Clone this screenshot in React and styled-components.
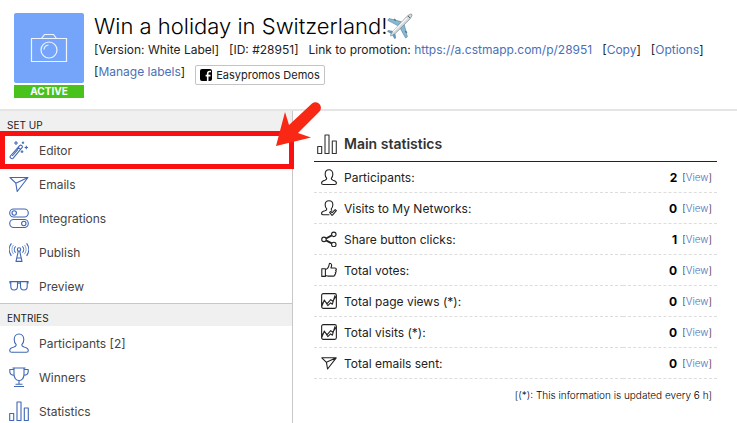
/**
 *
 * PromotionPage
 *
 */

import React from 'react'
import styled, { createGlobalStyle } from 'styled-components'

const GlobalStyle = createGlobalStyle`
  *, *::before, *::after {
    box-sizing: border-box;
  }

  body {
    margin: 0;
    background: #fff;
    color: #222;
    font-family: Inter, "Liberation Sans", sans-serif;
    font-size: 12px;
    font-weight: 400;
  }
`

const Page = styled.div`
  display: flex;
  flex-direction: column;
  height: 100vh;
  overflow: hidden;
`

const Link = styled.a`
  color: #4a6fb8;
  text-decoration: none;
`

const Header = styled.header`
  display: flex;
  gap: 10px;
  padding: 13px 14px 11px;
  border-bottom: 2px solid #e5e5e5;
`

const Cover = styled.div`
  display: flex;
  flex-direction: column;
  gap: 2px;
  flex: none;
  width: 70px;
`

const Thumb = styled.div`
  display: flex;
  align-items: center;
  justify-content: center;
  height: 70px;
  border-radius: 2px;
  background: #75a5fb;
`

const Status = styled.span`
  background: #49c31c;
  color: #fff;
  font-size: 10px;
  font-weight: 700;
  line-height: 13px;
  text-align: center;
`

const Details = styled.div`
  flex: 1;
  min-width: 0;
`

const Title = styled.h1`
  display: flex;
  align-items: center;
  margin: 0;
  color: #000;
  font-size: 22px;
  font-weight: 300;
  line-height: 26px;
`

const Meta = styled.div`
  display: flex;
  flex-wrap: wrap;
  align-items: flex-start;
  column-gap: 10px;
  line-height: 22px;
`

const Tag = styled.span`
  display: flex;
  align-items: center;
  gap: 4px;
  height: 20px;
  margin-top: 4px;
  padding: 0 4px;
  border: 1px solid #c4c4c4;
  border-radius: 2px;
  font-size: 11px;
`

const Body = styled.div`
  display: flex;
  flex: 1;
  min-height: 0;
`

const Sidebar = styled.nav`
  position: relative;
  flex: none;
  width: 293px;
  border-right: 1px solid #c8c8c8;
`

const SectionTitle = styled.h2`
  margin: 0;
  padding: 0 7px;
  height: ${props => (props.$divided ? '23px' : '22px')};
  border-top: ${props => (props.$divided ? '1px solid #c8c8c8' : '0')};
  background: #f0f0f0;
  color: #222;
  font-size: 10px;
  font-weight: 400;
  line-height: 28px;
`

const MenuList = styled.ul`
  margin: 0;
  padding: 0;
  list-style: none;
`

const MenuLink = styled.a`
  display: flex;
  align-items: center;
  gap: 10px;
  height: 34px;
  padding: 0 9px;
  color: #444;
  text-decoration: none;

  svg {
    color: #3f67b5;
  }
`

const Highlight = styled.div`
  position: absolute;
  z-index: 1;
  top: 20px;
  left: 0;
  right: -2px;
  height: 38px;
  border: 5px solid #fa1010;
  pointer-events: none;
`

const Pointer = styled.svg`
  position: absolute;
  z-index: 2;
  top: -11px;
  right: -32px;
  pointer-events: none;
`

const Main = styled.main`
  flex: 1;
  min-width: 0;
  padding: 0 20px 0 21px;
`

const StatsTitle = styled.h2`
  display: flex;
  align-items: center;
  gap: 7px;
  height: 51px;
  margin: 0;
  padding: 15px 3px 0;
  border-bottom: 1px solid #222;
  color: #333;
  font-size: 14px;
  font-weight: 600;
`

const StatsTable = styled.table`
  width: 100%;
  border-spacing: 0;

  th,
  td {
    height: 31px;
    padding: 0;
    border-bottom: 1px dashed #ddd;
    font-weight: 400;
    text-align: left;
  }
`

const StatLabel = styled.span`
  display: flex;
  align-items: center;
  gap: 7px;
  padding-left: 7px;
`

const StatValue = styled.span`
  display: flex;
  align-items: center;
  justify-content: flex-end;
  gap: 5px;
  padding-right: 5px;
  font-size: 10px;
  font-weight: 300;

  strong {
    color: #000;
    font-size: 12px;
    font-weight: 700;
  }
`

const Note = styled.p`
  margin: 8px 5px 0;
  color: #000;
  font-size: 10px;
  font-weight: 300;
  line-height: 16px;
  text-align: right;
`

const shapes = {
  wand: (
    <>
      <path d="M1.4 16 10.6 5.6a1.6 1.6 0 0 1 2.4 2.1L4 18.3c-1.2 1.2-3.8-.8-2.6-2.3zM9.2 7.4l2.2 1.9M3.2 16 9 9.4" />
      <path d="M7 1v4M5 3h4M14 1.5v2.4M12.8 2.7h2.4M17.3 5.8v3.4M15.6 7.5H19M13 10.3v2.8M11.6 11.7h2.8" />
    </>
  ),
  send: <path d="M1 3.5h18L8.2 17.5 6.8 9.2zM6.8 9.2 19 3.5M1 3.5l5.8 5.7" />,
  toggles: (
    <>
      <rect x="0.7" y="1" width="18.6" height="8" rx="4" />
      <rect x="0.7" y="11.5" width="18.6" height="8" rx="4" />
      <circle cx="5.2" cy="5" r="2.2" />
      <circle cx="14.8" cy="15.5" r="2.2" />
    </>
  ),
  antenna: (
    <>
      <circle cx="10" cy="7.5" r="1.7" />
      <path d="M9.3 9.2 7 19.4h6L10.7 9.2M8 16h4M6.6 4.3a4.6 4.6 0 0 0 0 6.4M13.4 4.3a4.6 4.6 0 0 1 0 6.4M2.4 1.3a10.5 10.5 0 0 0 0 12.6M17.6 1.3a10.5 10.5 0 0 1 0 12.6" />
      <path d="M4.5 2.9a8 8 0 0 0 0 9.2M15.5 2.9a8 8 0 0 1 0 9.2" strokeWidth="0.6" />
    </>
  ),
  glasses: (
    <path d="M.3 5.6h19.4M.3 7h1.4M18.3 7h1.4M1.8 5.8v4.4c0 2.2 1.2 3.8 3.2 3.8s3.5-1.6 3.5-3.8V5.8M11.5 5.8v4.4c0 2.2 1.5 3.8 3.5 3.8s3.2-1.6 3.2-3.8V5.8M8.5 7.6c.9-.7 2.1-.7 3 0" />
  ),
  person: (
    <path d="M10 1C7 1 5.2 3.2 5.2 6.5c0 2.2.8 4.1 2 5.2 0 1.5-.7 1.9-2.2 2.3-2.8.6-4.3 1.3-4.3 3.5 0 1.2.8 1.8 2 1.8h14.6c1.2 0 2-.6 2-1.8 0-2.2-1.5-2.9-4.3-3.5-1.5-.4-2.2-.8-2.2-2.3 1.2-1.1 2-3 2-5.2C14.8 3.2 13 1 10 1z" />
  ),
  personCheck: (
    <path d="M10.5 18.5H2.7c-1.2 0-2-.5-2-1.7 0-2 1.5-2.7 4.3-3.3 1.5-.4 2.2-.8 2.2-2.3-1.2-1.1-2-3-2-5.2C5.2 3 7 1 10 1s4.8 2 4.8 5c0 2.2-.8 4.1-2 5.2 0 1 .3 1.5 1.2 2M10.8 15.5l1.4-1.2 1.8 1.6 3.7-3.8 1.5 1.3-4.8 5.4q-.6.5-1.2 0z" />
  ),
  trophy: (
    <path d="M5 1h10v6c0 4-2 6.5-5 6.5S5 11 5 7zM3.5 1h13M5 2.5H.8v2C.8 7 2.5 8.2 5.5 8.5M15 2.5h4.2v2c0 2.5-1.7 3.7-4.7 4M10 13.5v3.7M6.5 17.2h7M5 19.5h10" />
  ),
  bars: (
    <path d="M.7 12.5h4v7h-4zM8 1h4v18.5H8zM15.3 7h4v12.5h-4z" />
  ),
  share: (
    <>
      <circle cx="3.7" cy="10.5" r="2.8" />
      <circle cx="16" cy="4.2" r="2.8" />
      <circle cx="16" cy="16.8" r="2.8" />
      <path d="m6.2 9.3 7.3-3.8M6.2 11.7l7.3 3.8" strokeWidth="2.2" />
    </>
  ),
  thumb: (
    <path d="M1 8.5h4.5V18H1zM5.5 9.5C8.5 8.5 10 6.5 10.3 2.5c.2-1 2.8-1.2 3 1.2 0 1.6-.5 2.8-.9 3.8h5c2.2 0 2.2 2.6.8 3 1.2.8.8 2.4-.3 2.7.8 1 .3 2.2-.7 2.4.5 1.3-.4 2-1.6 2H9c-1.5 0-2-.6-3.5-.8" />
  ),
  graph: (
    <>
      <rect x="0.8" y="0.8" width="18.4" height="18.4" rx="2" />
      <path d="m1 13.5 3.5-3.8 3.2 3.5 4.5-5 2.3 2 4.5-6M1 16.5l3.2-7.8 4.3 7 3.5-3.4 2.2 1.7L17.5 3" />
    </>
  ),
}

const Icon = ({ name, size = 20 }) => (
  <svg
    width={size}
    height={size}
    viewBox="0 0 20 20"
    fill="none"
    stroke="currentColor"
    strokeWidth={22 / size}
    strokeLinejoin="round"
    aria-hidden="true"
  >
    {shapes[name]}
  </svg>
)

const CameraIcon = () => (
  <svg width="38" height="30" viewBox="0 0 38 30" fill="none" stroke="#eef4ff" strokeWidth="1.2" aria-hidden="true">
    <path d="M1.5 5.5h35v23h-35zM11.5 5.5l3-4h9l3 4" />
    <circle cx="19" cy="17" r="8" />
    <path d="M14 16.5a5 5 0 0 1 4.5-4.5" />
  </svg>
)

const PlaneIcon = () => (
  <svg width="26" height="26" viewBox="0 0 26 26" role="img" aria-label="Airplane">
    <path d="M14.5 8.8 2 5.5.8 7.3l10 5.3zM17.2 11.5l3.2 12.3-1.8 1.2-5.4-9.8z" fill="#86b9d6" stroke="#4c7f9e" strokeWidth=".6" />
    <path d="m5.5 18.2-4.3-.8-.7 1 4 2.2zM8 20.8l.7 4.2-1 .8-2.3-4.2z" fill="#58a0c8" stroke="#457b99" strokeWidth=".5" />
    <path d="M24.7 1.2c.8 1.2-.8 3.8-2.6 5.6L8.2 20.5c-1.8 1.4-3.6 2.4-4.6 2.3-.2-1 .9-2.9 2.3-4.6L19.3 4.1c1.8-1.8 4.2-3.6 5.4-2.9z" fill="#d5dadd" stroke="#737f87" strokeWidth=".7" />
    <path d="M6.2 18.7 20 4.8" stroke="#fff" strokeWidth="1.2" />
    <path d="m21 2.9 2.2 2.2" stroke="#4a5962" strokeWidth="1" />
    <path d="m7 6 1.8 1.8M18.2 18l1.7 1.8" stroke="#687985" strokeWidth="1.6" />
  </svg>
)

const FacebookIcon = () => (
  <svg width="12" height="12" viewBox="0 0 12 12" aria-hidden="true">
    <rect width="12" height="12" rx="2" fill="#000" />
    <path d="M11 2.5H9.6C8.2 2.5 7.7 3.2 7.7 4.6V12M5.6 6.6h4.9" stroke="#fff" strokeWidth="1.6" fill="none" />
  </svg>
)

const sections = [
  {
    title: 'SET UP',
    items: [
      { icon: 'wand', label: 'Editor' },
      { icon: 'send', label: 'Emails' },
      { icon: 'toggles', label: 'Integrations' },
      { icon: 'antenna', label: 'Publish' },
      { icon: 'glasses', label: 'Preview' },
    ],
  },
  {
    title: 'ENTRIES',
    items: [
      { icon: 'person', label: 'Participants [2]' },
      { icon: 'trophy', label: 'Winners' },
      { icon: 'bars', label: 'Statistics' },
    ],
  },
]

const stats = [
  { icon: 'person', label: 'Participants:', value: 2 },
  { icon: 'personCheck', label: 'Visits to My Networks:', value: 0 },
  { icon: 'share', label: 'Share button clicks:', value: 1 },
  { icon: 'thumb', label: 'Total votes:', value: 0 },
  { icon: 'graph', label: 'Total page views (*):', value: 0 },
  { icon: 'graph', label: 'Total visits (*):', value: 0 },
  { icon: 'send', label: 'Total emails sent:', value: 0 },
]

const BracketLink = ({ children }) => (
  <span>
    [<Link href="#">{children}</Link>]
  </span>
)

function PromotionHeader() {
  return (
    <Header>
      <Cover>
        <Thumb>
          <CameraIcon />
        </Thumb>
        <Status>ACTIVE</Status>
      </Cover>
      <Details>
        <Title>
          Win a holiday in Switzerland!
          <PlaneIcon />
        </Title>
        <Meta>
          <span>[Version: White Label]</span>
          <span>[ID: #28951]</span>
          <span>
            Link to promotion: <Link href="#">https://a.cstmapp.com/p/28951</Link>
          </span>
          <BracketLink>Copy</BracketLink>
          <BracketLink>Options</BracketLink>
        </Meta>
        <Meta>
          <BracketLink>Manage labels</BracketLink>
          <Tag>
            <FacebookIcon />
            Easypromos Demos
          </Tag>
        </Meta>
      </Details>
    </Header>
  )
}

function PromotionMenu() {
  return (
    <Sidebar>
      {sections.map((section, index) => (
        <section key={section.title}>
          <SectionTitle $divided={index > 0}>{section.title}</SectionTitle>
          <MenuList>
            {section.items.map(item => (
              <li key={item.label}>
                <MenuLink href="#">
                  <Icon name={item.icon} />
                  {item.label}
                </MenuLink>
              </li>
            ))}
          </MenuList>
        </section>
      ))}
      <Highlight />
      <Pointer width="50" height="50" viewBox="0 0 50 50" aria-hidden="true">
        <path
          d="M2 46 11 12l4 13L38 3.5a5.5 5.5 0 0 1 7.5 8L24 33l13 4.5z"
          fill="#f92814"
        />
      </Pointer>
    </Sidebar>
  )
}

function MainStatistics() {
  return (
    <Main>
      <StatsTitle>
        <Icon name="bars" />
        Main statistics
      </StatsTitle>
      <StatsTable>
        <tbody>
          {stats.map(({ icon, label, value }) => (
            <tr key={label}>
              <th scope="row">
                <StatLabel>
                  <Icon name={icon} size={16} />
                  {label}
                </StatLabel>
              </th>
              <td>
                <StatValue>
                  <strong>{value}</strong>
                  <BracketLink>View</BracketLink>
                </StatValue>
              </td>
            </tr>
          ))}
        </tbody>
      </StatsTable>
      <Note>[(*): This information is updated every 6 h]</Note>
    </Main>
  )
}

export default function App() {
  return (
    <Page>
      <GlobalStyle />
      <PromotionHeader />
      <Body>
        <PromotionMenu />
        <MainStatistics />
      </Body>
    </Page>
  )
}
